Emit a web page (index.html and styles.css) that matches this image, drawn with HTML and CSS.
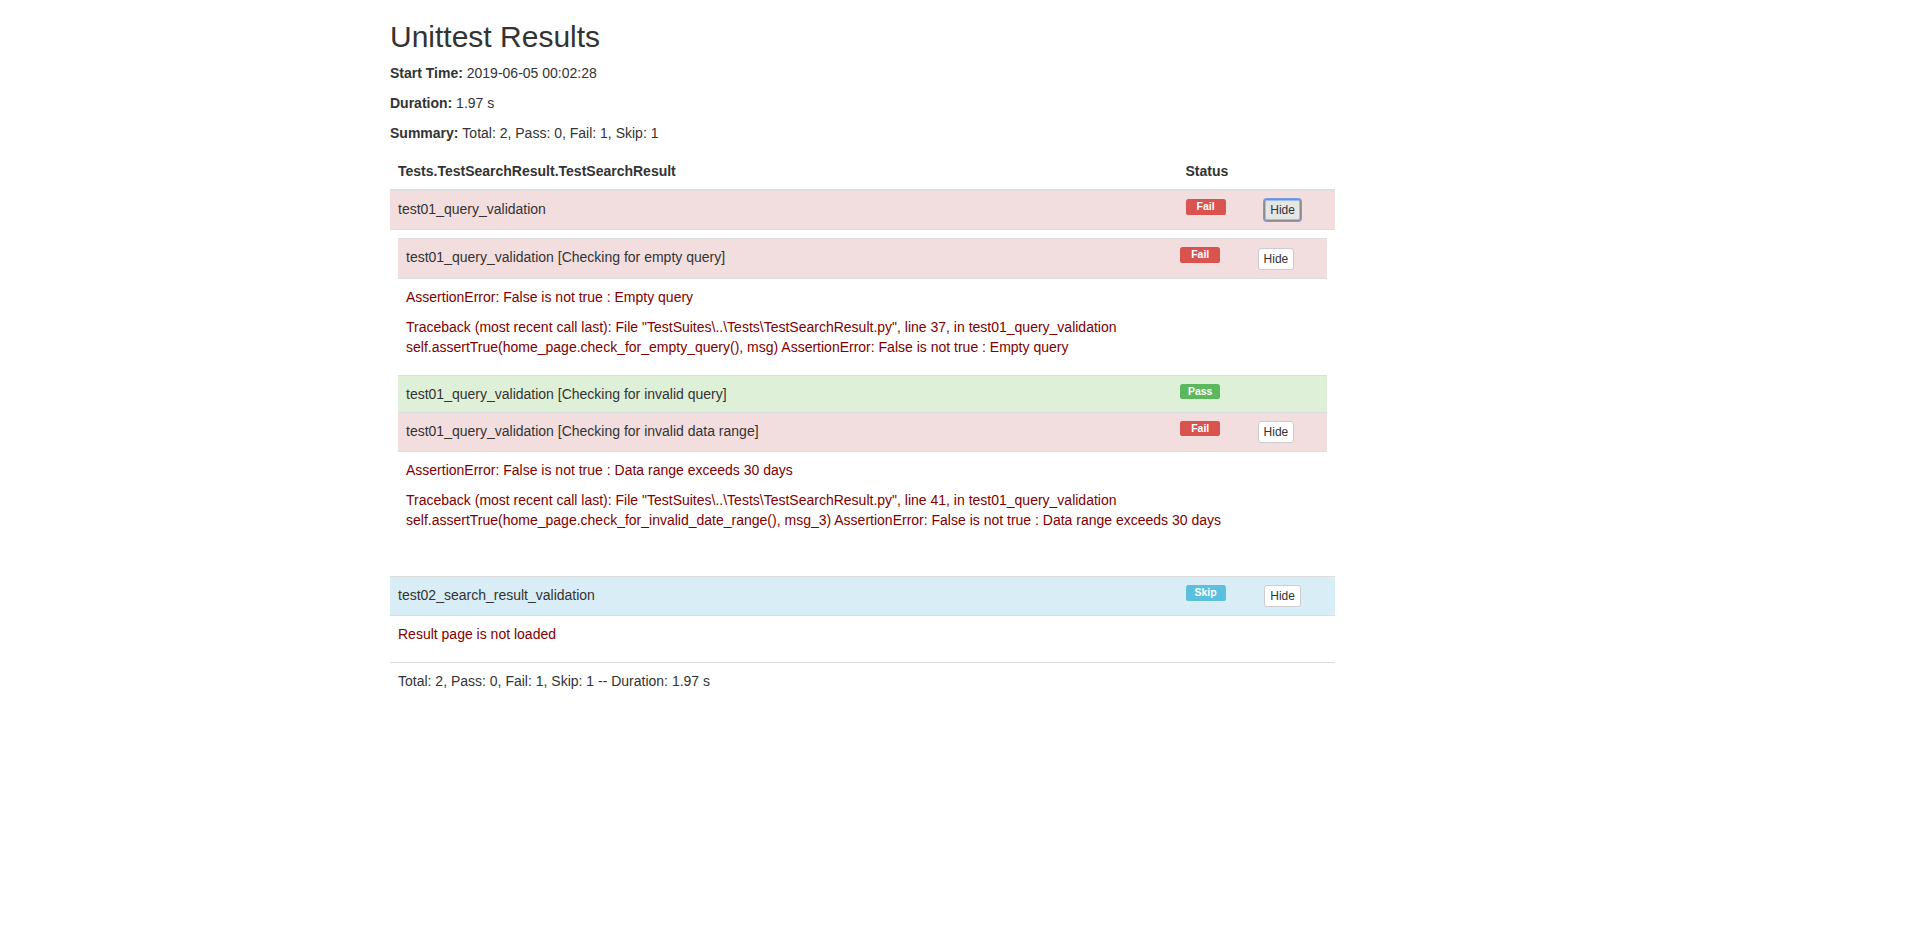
FILE: index.html
```html
<!DOCTYPE html>
<html lang="en">
<head>
<meta charset="utf-8">
<title>Unittest Results</title>
<link rel="stylesheet" href="styles.css">
</head>
<body>
<div class="container">
  <div class="row">
    <div class="col-full">
      <h2 class="title">Unittest Results</h2>
      <p class="attribute"><strong>Start Time: </strong>2019-06-05 00:02:28</p>
      <p class="attribute"><strong>Duration: </strong>1.97 s</p>
      <p class="attribute"><strong>Summary: </strong>Total: 2, Pass: 0, Fail: 1, Skip: 1</p>
    </div>
  </div>
  <div class="row">
    <div class="col-main">
      <table class="table">
        <thead>
          <tr>
            <th>Tests.TestSearchResult.TestSearchResult</th>
            <th>Status</th>
            <th></th>
          </tr>
        </thead>
        <tbody>
          <tr class="danger">
            <td class="c-name">test01_query_validation</td>
            <td class="c-narrow"><span class="label label-danger">Fail</span></td>
            <td class="c-narrow"><button class="btn btn-xs btn-focus">Hide</button></td>
          </tr>
          <tr>
            <td colspan="3">
              <table class="table">
                <tbody>
                  <tr class="danger">
                    <td class="c-name">test01_query_validation [Checking for empty query]</td>
                    <td class="c-narrow"><span class="label label-danger">Fail</span></td>
                    <td class="c-narrow"><button class="btn btn-xs">Hide</button></td>
                  </tr>
                  <tr>
                    <td colspan="3">
                      <p class="err">AssertionError: False is not true : Empty query</p>
                      <p class="err">Traceback (most recent call last): File "TestSuites\..\Tests\TestSearchResult.py", line 37, in test01_query_validation self.assertTrue(home_page.check_for_empty_query(), msg) AssertionError: False is not true : Empty query</p>
                    </td>
                  </tr>
                  <tr class="success">
                    <td class="c-name">test01_query_validation [Checking for invalid query]</td>
                    <td class="c-narrow"><span class="label label-success">Pass</span></td>
                    <td class="c-narrow"></td>
                  </tr>
                  <tr class="danger">
                    <td class="c-name">test01_query_validation [Checking for invalid data range]</td>
                    <td class="c-narrow"><span class="label label-danger">Fail</span></td>
                    <td class="c-narrow"><button class="btn btn-xs">Hide</button></td>
                  </tr>
                  <tr>
                    <td colspan="3">
                      <p class="err">AssertionError: False is not true : Data range exceeds 30 days</p>
                      <p class="err">Traceback (most recent call last): File "TestSuites\..\Tests\TestSearchResult.py", line 41, in test01_query_validation<br>self.assertTrue(home_page.check_for_invalid_date_range(), msg_3) AssertionError: False is not true : Data range exceeds 30 days</p>
                    </td>
                  </tr>
                </tbody>
              </table>
            </td>
          </tr>
          <tr class="info">
            <td class="c-name">test02_search_result_validation</td>
            <td class="c-narrow"><span class="label label-info">Skip</span></td>
            <td class="c-narrow"><button class="btn btn-xs">Hide</button></td>
          </tr>
          <tr>
            <td colspan="3">
              <p class="err">Result page is not loaded</p>
            </td>
          </tr>
        </tbody>
        <tfoot>
          <tr>
            <td colspan="3">Total: 2, Pass: 0, Fail: 1, Skip: 1 -- Duration: 1.97 s</td>
          </tr>
        </tfoot>
      </table>
    </div>
  </div>
</div>
</body>
</html>
```

FILE: styles.css
```css
* {
  box-sizing: border-box;
}

html, body {
  margin: 0;
  padding: 0;
  background: #fff;
}

body {
  font-family: "Liberation Sans", Arial, Helvetica, sans-serif;
  font-size: 14px;
  line-height: 1.42857143;
  color: #333;
}

.container {
  width: 1170px;
  margin: 0 auto;
  padding: 0 15px;
}

.row {
  display: flex;
  margin: 0 -15px;
}

.col-full {
  width: 100%;
  padding: 0 15px;
}

.col-main {
  width: 83.33333333%;
  padding: 0 15px;
}

.title {
  font-size: 30px;
  font-weight: 500;
  line-height: 1.1;
  margin: 20px 0 10px;
}

p {
  margin: 0 0 10px;
}

strong {
  font-weight: 700;
}

.table {
  width: 100%;
  max-width: 100%;
  margin-bottom: 20px;
  border-collapse: collapse;
  border-spacing: 0;
  background-color: transparent;
}

.table th {
  text-align: left;
  font-weight: 700;
  padding: 8px;
  line-height: 1.42857143;
  vertical-align: bottom;
  border-bottom: 2px solid #ddd;
}

.table td {
  padding: 8px;
  line-height: 1.42857143;
  vertical-align: top;
  border-top: 1px solid #ddd;
}

.c-name {
  width: 83.33333333%;
}

.c-narrow {
  width: 8.33333333%;
}

.danger > td {
  background-color: #f2dede;
}

.success > td {
  background-color: #dff0d8;
}

.info > td {
  background-color: #d9edf7;
}

.label {
  display: block;
  width: 40px;
  padding: .2em .6em .3em;
  font-size: 75%;
  font-weight: 700;
  line-height: 1;
  color: #fff;
  text-align: center;
  white-space: nowrap;
  border-radius: .25em;
}

.label-danger {
  background-color: #d9534f;
}

.label-success {
  background-color: #5cb85c;
}

.label-info {
  background-color: #5bc0de;
}

.btn {
  display: inline-block;
  font-family: inherit;
  font-weight: 400;
  text-align: center;
  vertical-align: middle;
  white-space: nowrap;
  cursor: pointer;
  color: #333;
  background-color: #fff;
  border: 1px solid #ccc;
  margin: 0;
}

.btn-xs {
  padding: 1px 5px;
  font-size: 12px;
  line-height: 1.5;
  border-radius: 3px;
}

.btn-focus {
  background-color: #e6e6e6;
  border-color: #8c8c8c;
  outline: none;
  box-shadow: 0 0 0 1px #6f9be8, inset 0 0 0 1px #9fbdf0;
}

.err {
  color: #800000;
}
```
